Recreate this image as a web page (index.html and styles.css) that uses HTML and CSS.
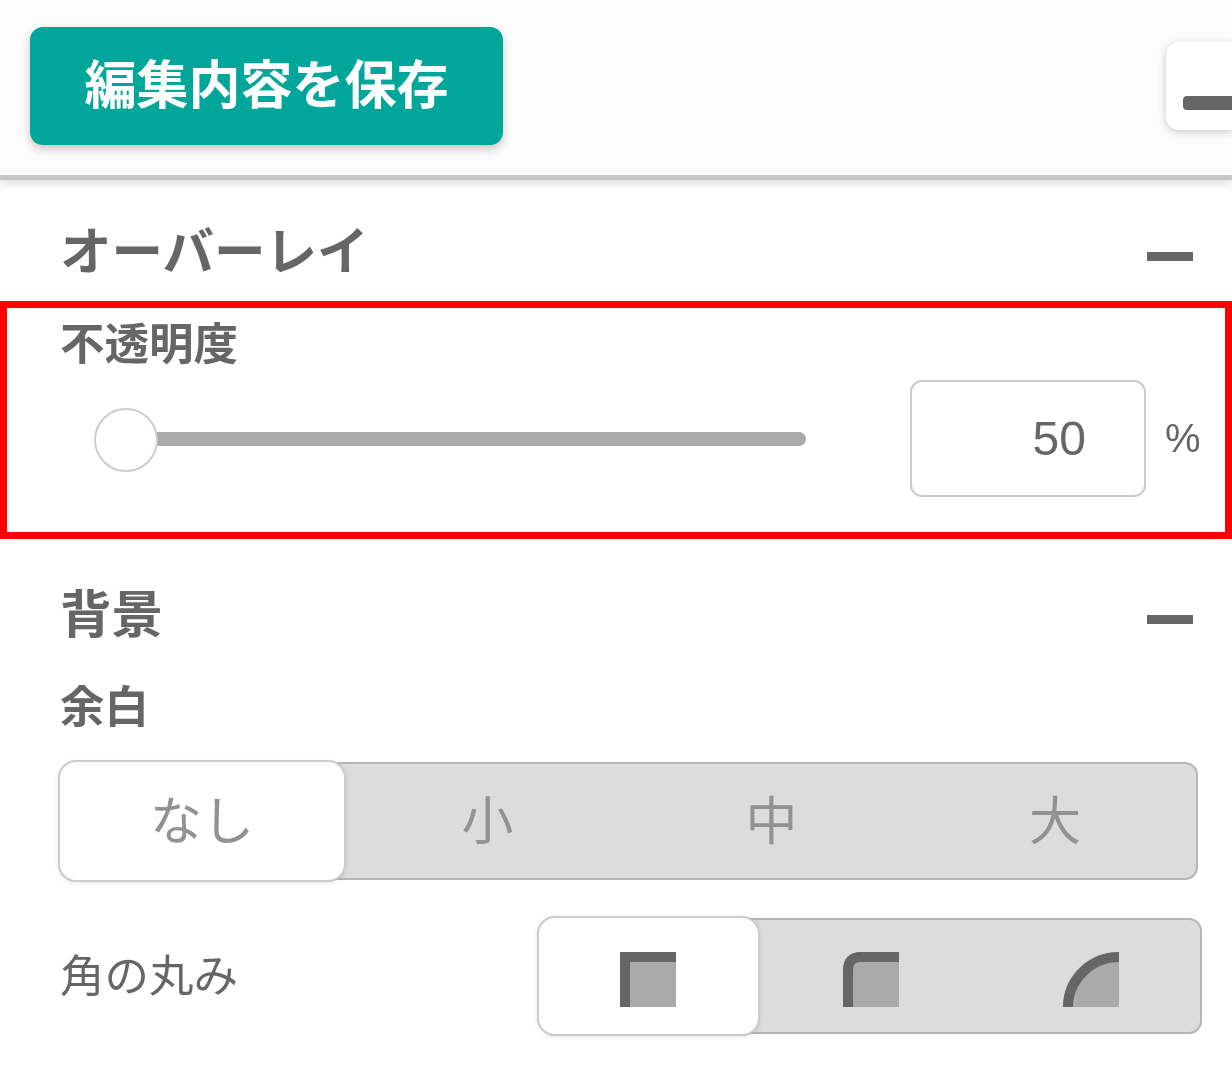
FILE: index.html
```html
<!DOCTYPE html>
<html lang="ja">
<head>
<meta charset="utf-8">
<title>編集内容を保存</title>
<link rel="stylesheet" href="styles.css">
</head>
<body>
<header class="topbar">
  <button class="save"><span class="save-text">編集内容を保存</span></button>
  <div class="collapse"><span class="collapse-dash"></span></div>
</header>
<main>
  <div class="sec-head first">
    <h2 class="sec-title">オーバーレイ</h2>
    <span class="minus"></span>
  </div>
  <section class="highlight">
    <h3 class="field-label">不透明度</h3>
    <div class="slider-row">
      <div class="slider"><div class="track"></div><div class="thumb"></div></div>
      <div class="num">50</div>
      <span class="unit">%</span>
    </div>
  </section>
  <div class="sec-head second">
    <h2 class="sec-title">背景</h2>
    <span class="minus"></span>
  </div>
  <div class="body-block">
    <h3 class="field-label">余白</h3>
    <div class="seg seg-four">
      <div class="cell on">なし</div>
      <div class="cell">小</div>
      <div class="cell">中</div>
      <div class="cell">大</div>
    </div>
    <div class="corner-row">
      <span class="corner-label">角の丸み</span>
      <div class="seg seg-three">
        <div class="cell on">
          <svg class="ico" viewBox="0 0 56 55"><rect x="0" y="0" width="56" height="55" fill="#aaa"/><path d="M5 55V5H56" fill="none" stroke="#666" stroke-width="10"/></svg>
        </div>
        <div class="cell">
          <svg class="ico" viewBox="0 0 56 55"><path d="M0 55V18Q0 0 18 0H56V55Z" fill="#aaa"/><path d="M5 55V18Q5 5 18 5H56" fill="none" stroke="#666" stroke-width="10"/></svg>
        </div>
        <div class="cell">
          <svg class="ico" viewBox="0 0 56 55"><path d="M0 55C0 24 24 0 56 0V55Z" fill="#aaa"/><path d="M5 55C5 28 28 5 56 5" fill="none" stroke="#666" stroke-width="10"/></svg>
        </div>
      </div>
    </div>
  </div>
</main>
</body>
</html>
```
FILE: styles.css
```css
* { box-sizing: border-box; }
html, body { margin: 0; padding: 0; }
body {
  width: 1232px;
  height: 1080px;
  overflow: hidden;
  background: #fff;
  color: #666;
  font-family: "Noto Sans CJK JP", "Noto Sans", sans-serif;
}
.topbar {
  height: 180px;
  background: #fcfcfc;
  border-bottom: 5px solid #c6c6c6;
  box-shadow: 0 5px 7px rgba(0,0,0,.1);
  padding: 27px 0 0 30px;
  display: flex;
  align-items: flex-start;
  filter: blur(.5px);
}
.save {
  width: 473px;
  height: 118px;
  border: 0;
  border-radius: 13px;
  background: #00a699;
  color: #fff;
  font: 700 52px/118px "Noto Sans CJK JP", sans-serif;
  padding: 0 0 9px;
  box-shadow: 0 4px 10px rgba(0,0,0,.22);
}
.save-text { display: block; line-height: 100px; }
.collapse {
  margin: 15px 0 0 auto;
  width: 66px;
  height: 88px;
  background: #fff;
  border-radius: 13px 0 0 13px;
  box-shadow: 0 2px 8px rgba(0,0,0,.2);
  flex: none;
  padding: 54px 0 0 17px;
}
.collapse-dash {
  display: block;
  height: 14px;
  background: #666;
  border-radius: 4px 0 0 4px;
}
.sec-head {
  display: flex;
  align-items: center;
  justify-content: space-between;
  padding: 0 39px 0 60px;
  height: 60px;
  filter: blur(.5px);
}
.sec-head.first { margin-top: 40px; margin-bottom: 21px; }
.sec-head.second { margin-top: 44px; margin-bottom: 0; }
.sec-title {
  margin: -4px 0 0;
  font-size: 51.500px;
  line-height: 60px;
  font-weight: 700;
  color: #666;
}
.minus {
  display: block;
  width: 46px;
  height: 9px;
  background: #666;
  margin-top: 13px;
}
.highlight {
  border: 7px solid #f00;
  height: 238px;
  padding: 3px 0 0 55px;
}
.field-label {
  margin: 0 0 0 -2px;
  font-size: 44.500px;
  line-height: 60px;
  font-weight: 700;
  color: #666;
  filter: blur(.5px);
}
.slider-row {
  display: flex;
  align-items: center;
  margin-top: 9px;
  height: 117px;
  filter: blur(.5px);
}
.slider {
  position: relative;
  width: 712px;
  height: 64px;
  margin-left: 32px;
  flex: none;
  display: flex;
  align-items: center;
}
.track {
  width: 100%;
  height: 14px;
  margin-left: 32px;
  background: #aaa;
  border-radius: 0 7px 7px 0;
}
.thumb {
  position: absolute;
  left: 0;
  top: 1px;
  width: 64px;
  height: 64px;
  border-radius: 50%;
  background: #fff;
  border: 2px solid #ccc;
}
.num {
  margin-left: 104px;
  width: 236px;
  height: 117px;
  border: 2px solid #ccc;
  border-radius: 12px;
  font: 400 48px/113px "Liberation Sans", Arial, sans-serif;
  color: #666;
  text-align: right;
  padding-right: 58px;
  flex: none;
}
.unit {
  margin: 0 0 2px 19px;
  font: 400 40px/1 "Liberation Sans", Arial, sans-serif;
  color: #666;
}
.body-block { padding: 31px 30px 0 62px; filter: blur(.5px); }
.body-block .field-label { filter: none; }
.seg {
  display: grid;
  background: #dcdcdc;
  border: 2px solid #b5b5b5;
  border-radius: 18px 13px 13px 18px;
}
.seg-four {
  margin: 28px 4px 0 -4px;
  height: 118px;
  grid-template-columns: 286px 283px 285px 1fr;
}
.seg-three {
  width: 665px;
  height: 116px;
  grid-template-columns: 221px 221px 1fr;
}
.cell {
  display: flex;
  align-items: center;
  justify-content: center;
  font-size: 52px;
  font-weight: 400;
  color: #929292;
  padding-bottom: 8px;
}
.seg-three .cell { padding: 6px 0 0; }
.seg-three .cell.on { padding-right: 1px; }
.cell.on {
  background: #fff;
  border: 2px solid #ccc;
  border-radius: 18px;
  margin: -4px 0 -4px -2px;
  box-shadow: 0 1px 4px rgba(0,0,0,.1);
}
.corner-row {
  display: flex;
  align-items: center;
  justify-content: space-between;
  margin-top: 38px;
}
.corner-label {
  margin: 0 0 6px -2px;
  font-size: 44.500px;
  line-height: 60px;
  font-weight: 400;
  color: #666;
}
.ico {
  display: block;
  width: 56px;
  height: 55px;
}
```
